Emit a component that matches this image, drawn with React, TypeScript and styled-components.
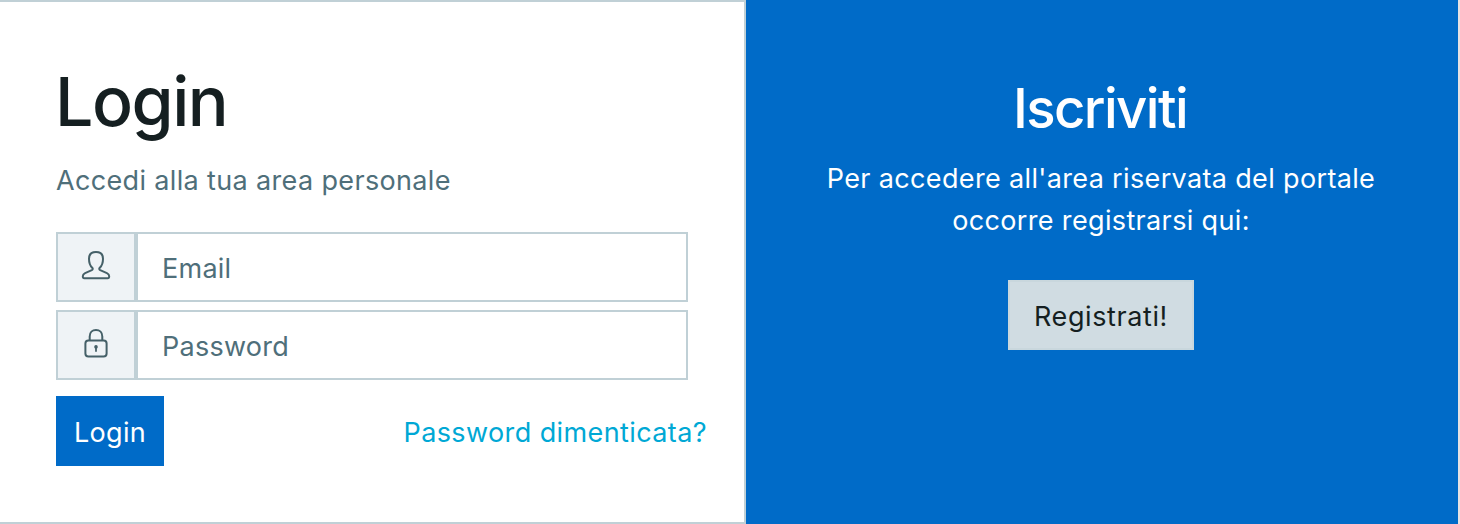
import React from "react";
import styled, { createGlobalStyle } from "styled-components";

const GlobalStyle = createGlobalStyle`
  * { box-sizing: border-box; }
  body {
    margin: 0;
    background: #e6e2e3;
    font-family: Inter, "Liberation Sans", sans-serif;
    font-size: 27px;
    line-height: 42px;
    overflow: hidden;
  }
  h1, h2, p { margin: 0; }
`;

const CardGroup = styled.main`
  display: flex;
  width: 1458px;
  height: 524px;
`;

const LoginCard = styled.section`
  width: 746px;
  padding: 57px 37px 0 56px;
  background: #fff;
  border: 2px solid #c0d0d6;
  border-left: 0;
`;

const SignupCard = styled.section`
  flex: 1;
  display: flex;
  flex-direction: column;
  align-items: center;
  padding: 74px 2px 0 0;
  background: #006bc8;
  color: #fff;
  text-align: center;
`;

const Title = styled.h1`
  margin-left: -1px;
  font-size: 68px;
  font-weight: 500;
  line-height: 84px;
  letter-spacing: -1.5px;
  color: #151f21;
`;

const Subtitle = styled.h2`
  font-size: 54.5px;
  font-weight: 500;
  line-height: 68px;
  letter-spacing: -1.6px;
  margin-left: -2px;
`;

const Lead = styled.p`
  margin: 17px 0 30px;
  color: #4f6f7a;
  letter-spacing: 0.35px;
`;

const Blurb = styled.p`
  margin: 16px 0 38px;
  letter-spacing: 0.35px;
`;

const InputGroup = styled.label`
  display: flex;
  width: 632px;
  height: 70px;
  margin-bottom: 8px;
`;

const Addon = styled.span`
  display: flex;
  align-items: center;
  justify-content: center;
  width: 80px;
  border: 2px solid #c0d0d6;
  background: #eff3f6;
  color: #456068;
`;

const Field = styled.input`
  flex: 1;
  min-width: 0;
  padding: 4px 24px 0;
  border: 2px solid #c0d0d6;
  border-radius: 0;
  background: #fff;
  color: #4f6f7a;
  font: inherit;
  letter-spacing: 0.25px;
  outline: 0;
  &::placeholder { color: #4f6f7a; opacity: 1; }
`;

const Actions = styled.div`
  display: flex;
  justify-content: space-between;
  align-items: center;
  margin-top: 16px;
`;

const Button = styled.button<{ $tone: "primary" | "light" }>`
  width: ${({ $tone }) => ($tone === "primary" ? "108px" : "186px")};
  height: 70px;
  padding: 3px 0 0;
  border: 2px solid ${({ $tone }) => ($tone === "primary" ? "#006bc8" : "#c9d7dd")};
  background: ${({ $tone }) => ($tone === "primary" ? "#006bc8" : "#d0dce2")};
  color: ${({ $tone }) => ($tone === "primary" ? "#fff" : "#151f21")};
  font: inherit;
  letter-spacing: ${({ $tone }) => ($tone === "primary" ? "0.3px" : "0.6px")};
`;

const ForgotLink = styled.a`
  padding-top: 3px;
  color: #00a8d5;
  letter-spacing: 0.4px;
`;

const Icon = styled.svg`
  display: block;
  margin-top: -4px;
  fill: none;
  stroke: currentColor;
  stroke-width: 2;
  stroke-linejoin: round;
`;

const UserIcon = () => (
  <Icon width="30" height="30" viewBox="0 0 30 30">
    <path d="M15 1.9c-4.4 0-7 2.5-7 6.8 0 4.2 1.2 7.1 3.2 9 .9.9.6 1.9-.4 2.4L4.1 23.2c-1.6.7-2.3 1.5-2.3 3.1 0 1.4.5 2 1.5 2h23.4c1 0 1.5-.6 1.5-2 0-1.6-.7-2.4-2.3-3.1l-6.7-3.1c-1-.5-1.3-1.5-.4-2.4 2-1.9 3.2-4.8 3.2-9 0-4.3-2.6-6.8-7-6.8z" />
  </Icon>
);

const LockIcon = () => (
  <Icon width="30" height="30" viewBox="0 0 30 30">
    <rect x="4.4" y="12.4" width="21.2" height="16" rx="3" />
    <path d="M8.7 12.4V8.4c0-3.8 2.6-6.4 6.3-6.4s6.3 2.6 6.3 6.4v4" />
    <path d="M15 18.5v5.2" strokeWidth="1.8" />
    <circle cx="15" cy="18.9" r="1.1" fill="currentColor" strokeWidth="1.4" />
  </Icon>
);

export default function App() {
  return (
    <>
      <GlobalStyle />
      <CardGroup>
        <LoginCard>
          <Title>Login</Title>
          <Lead>Accedi alla tua area personale</Lead>
          <InputGroup>
            <Addon><UserIcon /></Addon>
            <Field type="text" placeholder="Email" />
          </InputGroup>
          <InputGroup>
            <Addon><LockIcon /></Addon>
            <Field type="password" placeholder="Password" />
          </InputGroup>
          <Actions>
            <Button $tone="primary">Login</Button>
            <ForgotLink>Password dimenticata?</ForgotLink>
          </Actions>
        </LoginCard>
        <SignupCard>
          <Subtitle>Iscriviti</Subtitle>
          <Blurb>
            Per accedere all'area riservata del portale
            <br />
            occorre registrarsi qui:
          </Blurb>
          <Button $tone="light">Registrati!</Button>
        </SignupCard>
      </CardGroup>
    </>
  );
}
